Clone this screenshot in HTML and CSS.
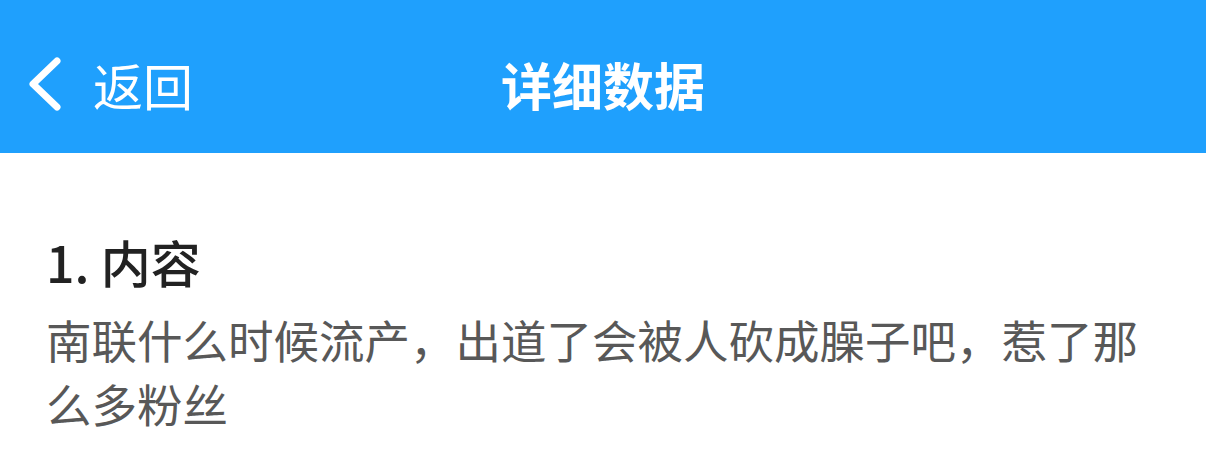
FILE: index.html
```html
<!DOCTYPE html>
<html lang="zh-CN">
<head>
    <meta charset="UTF-8">
    <meta name="viewport" content="width=device-width, initial-scale=1.0">
    <title>详细数据</title>
    <link rel="stylesheet" href="styles.css">
</head>
<body>
    <header class="nav-bar">
        <a href="#" class="nav-back" onclick="history.back()">
            <svg class="back-icon" viewBox="0 0 36 56" width="36" height="56">
                <path d="M31 5 L7 28 L31 51" fill="none" stroke="#fff" stroke-width="7" stroke-linecap="round" stroke-linejoin="round"/>
            </svg>
            <span>返回</span>
        </a>
        <h1 class="nav-title">详细数据</h1>
        <div></div>
    </header>

    <main class="detail">
        <h2 class="detail-title">1. 内容</h2>
        <p class="detail-text">南联什么时候流产，出道了会被人砍成臊子吧，惹了那么多粉丝</p>
    </main>
</body>
</html>
```

FILE: styles.css
```css
* {
    margin: 0;
    padding: 0;
    box-sizing: border-box;
}

body {
    font-family: "Noto Sans CJK SC", "Noto Sans", sans-serif;
    background: #fff;
    color: #222;
}

.nav-bar {
    height: 153px;
    padding-top: 14px;
    background: #1fa0fd;
    display: grid;
    grid-template-columns: 1fr auto 1fr;
    align-items: center;
    color: #fff;
}

.nav-back {
    display: flex;
    align-items: center;
    gap: 31px;
    padding-left: 26px;
    color: #fff;
    text-decoration: none;
    font-size: 50px;
}

.back-icon {
    display: block;
}

.nav-title {
    font-size: 51px;
    font-weight: 700;
}

.detail {
    padding: 77px 46px 0;
}

.detail-title {
    font-size: 50px;
    line-height: 62px;
    font-weight: 500;
    color: #222;
}

.detail-text {
    margin-top: 15px;
    font-size: 45.5px;
    line-height: 64px;
    color: #585858;
}
```
